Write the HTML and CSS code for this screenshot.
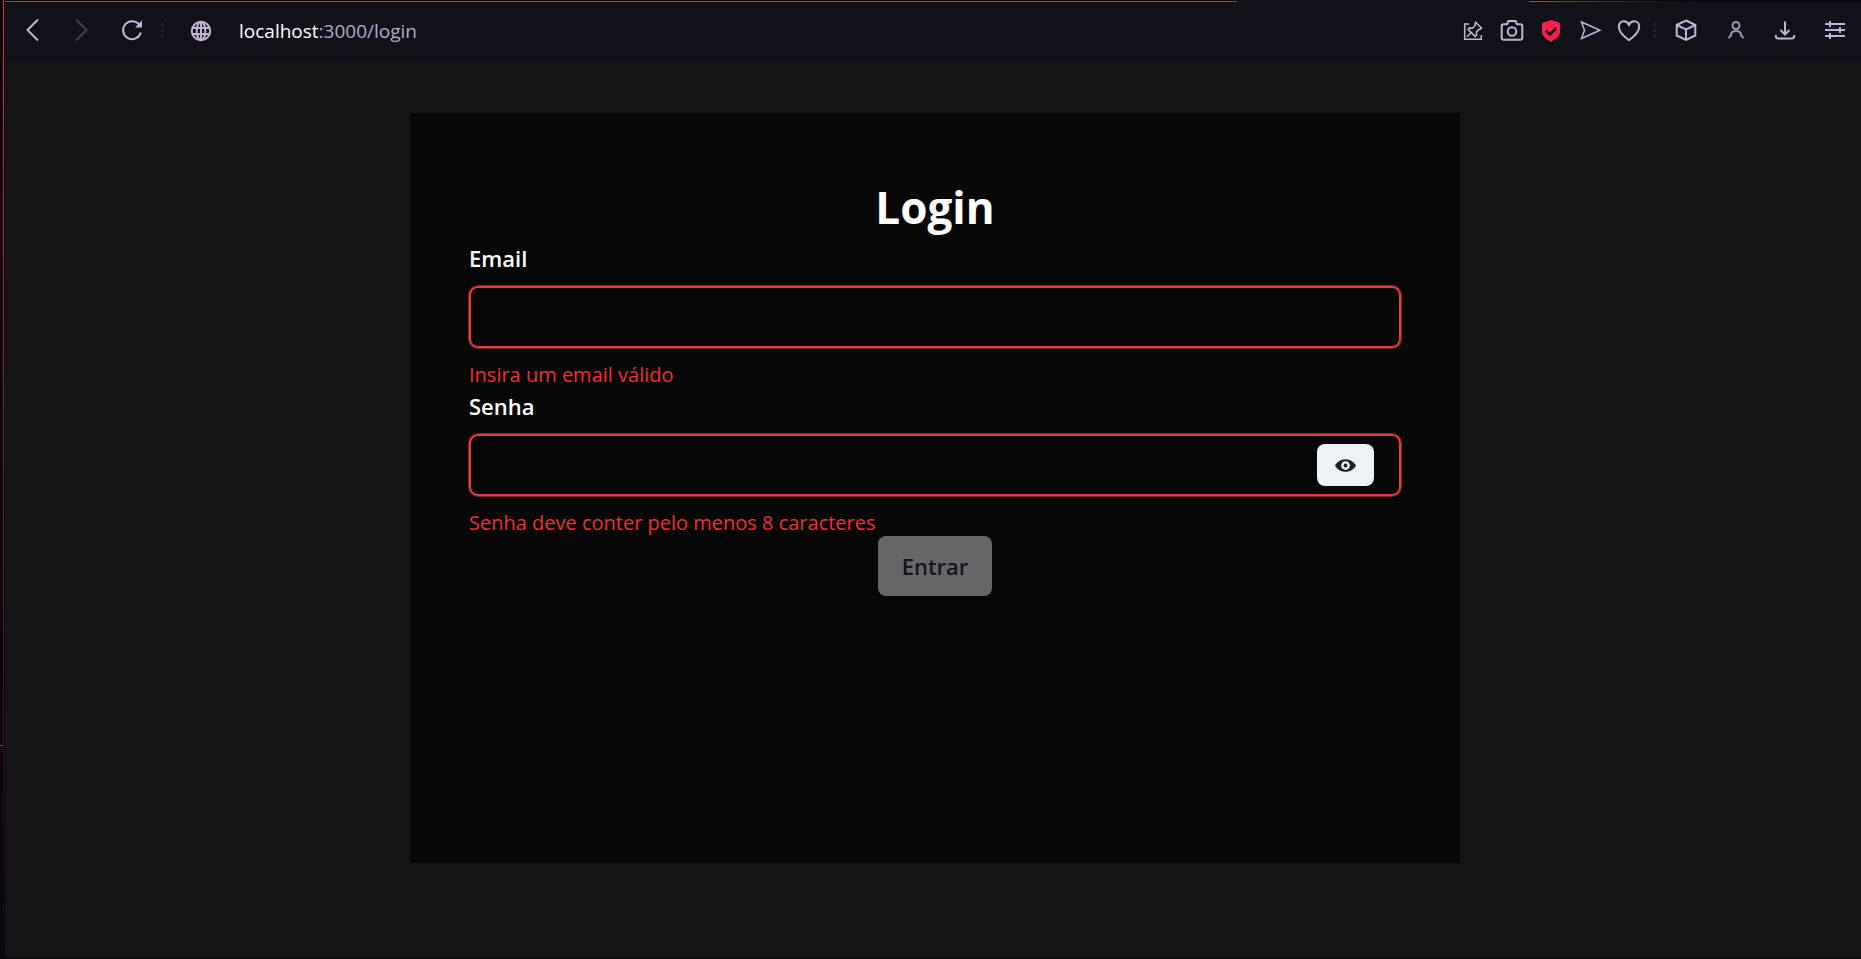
FILE: index.html
```html
<!DOCTYPE html>
<html lang="pt-BR">
<head>
<meta charset="utf-8">
<title>Login</title>
<link rel="stylesheet" href="styles.css">
</head>
<body>
<div class="edge" aria-hidden="true"><span class="edge-mark"></span></div>
<div class="window">
  <header class="toolbar">
    <nav class="nav-group" aria-label="Navegação">
      <button class="tool" aria-label="Voltar"><svg viewBox="0 0 24 24"><path d="M18 1.500 7.500 12 18 22.500"/></svg></button>
      <button class="tool dim" aria-label="Avançar"><svg viewBox="0 0 24 24"><path d="M6 1.500 16.500 12 6 22.500"/></svg></button>
      <button class="tool" aria-label="Recarregar"><svg viewBox="0 0 24 24"><path d="M19.500 7A9 9 0 1 0 20.800 14.500"/><path class="solid" d="M22 2.500V9.500H15z"/></svg></button>
    </nav>
    <span class="dots"></span>
    <div class="address">
      <button class="tool" aria-label="Informações do site"><svg viewBox="0 0 24 24"><circle cx="12" cy="13" r="9.200"/><ellipse cx="12" cy="13" rx="4.300" ry="9.200"/><path d="M3.500 10h17M3.500 16h17M12 4v18"/></svg></button>
      <a class="url" href="/login"><span class="host">localhost</span>:3000/login</a>
    </div>
    <div class="page-tools">
      <button class="tool thin" aria-label="Fixar"><svg viewBox="0 0 24 24"><path d="M8 6H3.700V21.300H20.300V17M14.600 4.200l6 6-1.500 1.200-.8-.3-3 3 .3 3-1.500 1.300-7-7 1.300-1.500 3 .3 3-3-.4-.8zM10.500 14.200 6 18.700"/></svg></button>
      <button class="tool" aria-label="Captura"><svg viewBox="0 0 24 24"><path d="M3.500 6.200H7l1.500-3.200h7L17 6.200h3.500a1.800 1.800 0 0 1 1.800 1.800v12a1.800 1.800 0 0 1-1.800 1.800h-17A1.800 1.800 0 0 1 1.700 20V8a1.800 1.800 0 0 1 1.800-1.800z"/><circle cx="12" cy="13.500" r="4.300"/></svg></button>
      <button class="tool" aria-label="Proteção"><svg viewBox="0 0 24 24"><path class="shield" d="M12 2 21 5v9c0 4-4 7-9 10-5-3-9-6-9-10V5z"/><path class="check" d="m7 12.500 4 4 6.500-6.500"/></svg></button>
      <button class="tool thin" aria-label="Enviar"><svg viewBox="0 0 24 24"><path d="M3.500 4 22 12.200 3.500 20.500 6.500 12.200z"/></svg></button>
      <button class="tool" aria-label="Favoritar"><svg viewBox="0 0 24 24"><path d="M12 22.300C7 18.500 1.800 14 1.800 8.700 1.800 5.500 4 3.300 6.800 3.300c2.300 0 4.200 1.300 5.200 3.500 1-2.200 2.900-3.500 5.200-3.500 2.800 0 5 2.200 5 5.400 0 5.300-5.200 9.800-10.200 13.600z"/></svg></button>
    </div>
    <span class="dots"></span>
    <div class="browser-tools">
      <button class="tool" aria-label="Extensões"><svg viewBox="0 0 24 24"><path d="M13 2.500 22.300 7v10.500L13 21.800 3.700 17.500V7zM3.700 7 13 11.300 22.300 7M13 11.300v10.500"/></svg></button>
      <button class="tool soft" aria-label="Perfil"><svg viewBox="0 0 24 24"><circle cx="13" cy="7.500" r="3.500"/><path d="M6 20.500c0-1 .2-1.500.7-1.800 1-.5 1.300-1 1.300-2 .2-2.200 2.200-3.700 5-3.700s4.800 1.500 5 3.700c0 1 .3 1.500 1.300 2 .5.300.7.800.7 1.800"/></svg></button>
      <button class="tool" aria-label="Downloads"><svg viewBox="0 0 24 24"><path d="M12 3.500v12.500M7.500 12l4.500 4.500 4.500-4.500M2.800 17v1a2.500 2.500 0 0 0 2.500 2.500h13.400a2.500 2.500 0 0 0 2.500-2.500v-1"/></svg></button>
      <button class="tool" aria-label="Configuração"><svg viewBox="0 0 24 24"><path d="M2 6h20M2 12h20M2 18h20M7 3v6M17 9v6M7 15v6"/></svg></button>
    </div>
  </header>
  <main class="page">
    <form class="card">
      <h1 class="title">Login</h1>
      <label class="label" for="email">Email</label>
      <input class="field" id="email" type="email" aria-invalid="true" aria-describedby="email-error">
      <p class="error" id="email-error">Insira um email válido</p>
      <label class="label" for="senha">Senha</label>
      <div class="field-wrap">
        <input class="field" id="senha" type="password" aria-invalid="true" aria-describedby="senha-error">
        <button class="reveal" type="button" aria-label="Mostrar senha"><svg viewBox="0 0 24 24"><path d="M12 4.800C6.500 4.800 2 8.200 0 12c2 3.800 6.500 7.200 12 7.200S22 15.800 24 12c-2-3.800-6.500-7.200-12-7.200z"/><circle class="iris" cx="12" cy="12" r="5"/><circle cx="12" cy="12" r="2.200"/></svg></button>
      </div>
      <p class="error" id="senha-error">Senha deve conter pelo menos 8 caracteres</p>
      <button class="submit" type="submit" disabled>Entrar</button>
    </form>
  </main>
</div>
</body>
</html>
```
FILE: styles.css
```css
* { box-sizing: border-box; }

body {
  margin: 0;
  min-height: 100vh;
  display: flex;
  background: #121019;
  color: #fff;
  font-family: "Open Sans", "Noto Sans", sans-serif;
}

button { font: inherit; border: 0; padding: 0; }

.edge {
  flex: none;
  width: 4px;
  border-right: 1px solid;
  border-image: linear-gradient(#fa1e4e, #5c1029 70%, #08070d) 1;
  background: #08070d;
}

.edge-mark {
  display: block;
  width: 3px;
  height: 1px;
  margin-top: 745px;
  background: #55555a;
}

.window {
  flex: 1;
  display: flex;
  flex-direction: column;
  border-left: 1px solid #08070d;
  border-bottom: 2px solid #0b090e;
}

.toolbar {
  display: flex;
  align-items: center;
  height: 60px;
  padding: 0 14px 0 15px;
  background:
    linear-gradient(90deg, #fa1e4e 0 66.4%, transparent 66.4% 82.1%, #fa1e4e 82.1%, #08070d 91%) 0 1px / 100% 1px no-repeat,
    linear-gradient(90deg, #08070d 0 66.4%, transparent 66.4% 82.1%, #08070d 82.1%) 0 0 / 100% 1px no-repeat,
    #121019;
}

.nav-group, .address, .page-tools, .browser-tools { display: flex; align-items: center; }
.nav-group { gap: 26px; }
.address { flex: 1; gap: 26px; padding-left: 25px; }
.page-tools { gap: 15px; }
.browser-tools { gap: 26px; padding-left: 17px; }

.tool {
  width: 24px;
  height: 24px;
  color: #c0b5d8;
  background: none;
}

.tool svg {
  display: block;
  fill: none;
  stroke: currentColor;
  stroke-width: 2;
}

.tool.dim { color: #45404f; }
.tool.soft { color: #a096b4; }
.tool.thin svg { stroke-width: 1.5; }
.tool .solid { fill: currentColor; stroke: none; }
.tool .shield { fill: #fa1e4e; stroke: none; }
.tool .check { stroke: #121019; stroke-width: 2.5; }

.dots {
  width: 3px;
  height: 15px;
  margin-left: 17px;
  background: repeating-linear-gradient(#252131 0 3px, transparent 3px 6px);
}

.page-tools + .dots { margin-left: 12px; }

.url {
  padding-top: 2px;
  color: #b5aacb;
  font-size: 19px;
  line-height: 28px;
  text-decoration: none;
}

.host { color: #fff; }

.page {
  flex: 1;
  padding: 53px 24px 24px 28px;
  background: #151515;
}

.card {
  display: flex;
  flex-direction: column;
  max-width: 1050px;
  min-height: 750px;
  margin: 0 auto;
  padding: 62px 59px 60px;
  background: #070707;
}

.title {
  margin: 0;
  font-size: 44px;
  font-weight: 700;
  line-height: 65px;
  text-align: center;
}

.label {
  margin-bottom: 10px;
  font-size: 22px;
  font-weight: 600;
  line-height: 36px;
}

.field {
  display: block;
  width: 100%;
  height: 62px;
  padding: 0 20px;
  border: 2px solid #e53e3e;
  border-radius: 9px;
  box-shadow: 0 0 0 1px #7f2424;
  background: transparent;
  color: #fff;
  font: inherit;
  font-size: 22px;
  outline: none;
}

.field-wrap { position: relative; }

.reveal {
  position: absolute;
  top: 10px;
  right: 27px;
  display: grid;
  place-items: center;
  width: 57px;
  height: 42px;
  border-radius: 8px;
  background: #edf2f7;
  color: #1a202c;
}

.reveal svg { width: 21px; height: 21px; fill: currentColor; }
.reveal .iris { fill: #edf2f7; }

.error {
  margin: 13px 0 0;
  color: #f03030;
  font-size: 20px;
  line-height: 27px;
}

.submit {
  align-self: center;
  height: 60px;
  padding: 0 24px;
  border-radius: 8px;
  background: #656668;
  color: #14161d;
  font-size: 22px;
  font-weight: 600;
}
```
